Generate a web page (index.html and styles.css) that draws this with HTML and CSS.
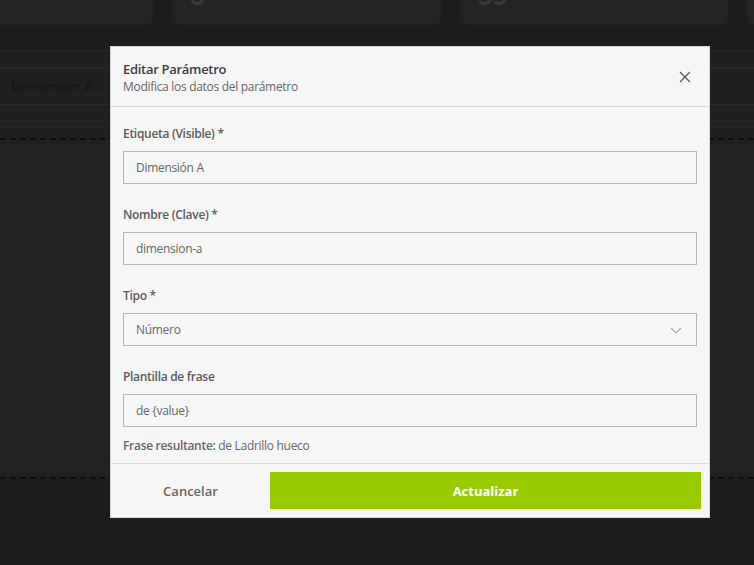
FILE: index.html
```html
<!DOCTYPE html>
<html lang="es">
<head>
<meta charset="utf-8">
<title>Editar Parámetro</title>
<link rel="stylesheet" href="styles.css">
</head>
<body>
<div class="page">
  <div class="cards">
    <div class="card card-a"></div>
    <div class="card card-b"><span class="big">8</span></div>
    <div class="card card-c"><span class="big">33</span></div>
    <div class="card card-d"></div>
  </div>
  <div class="table-area">
    <div class="table-head"></div>
    <div class="table-row"><span class="cell">Dimensión A...</span></div>
    <div class="table-foot"></div>
    <div class="table-gap"></div>
    <div class="dropzone"></div>
  </div>
</div>

<div class="backdrop"></div>

<div class="modal" role="dialog">
  <div class="modal-header">
    <div class="titles">
      <div class="title">Editar Parámetro</div>
      <div class="subtitle">Modifica los datos del parámetro</div>
    </div>
    <button class="close" aria-label="Cerrar">
      <svg width="12" height="12" viewBox="0 0 12 12"><path d="M1 1L11 11M11 1L1 11" stroke="#555" stroke-width="1.3" fill="none"/></svg>
    </button>
  </div>
  <div class="modal-body">
    <div class="field">
      <label class="label">Etiqueta (Visible) *</label>
      <div class="input">Dimensión A</div>
    </div>
    <div class="field">
      <label class="label">Nombre (Clave) *</label>
      <div class="input">dimension-a</div>
    </div>
    <div class="field">
      <label class="label">Tipo *</label>
      <div class="input select">Número
        <svg class="chev" width="12" height="7" viewBox="0 0 12 7"><path d="M1 1L6 6L11 1" stroke="#aaa" stroke-width="1.1" fill="none"/></svg>
      </div>
    </div>
    <div class="field last">
      <label class="label">Plantilla de frase</label>
      <div class="input">de {value}</div>
      <div class="result"><span class="result-key">Frase resultante:</span> de Ladrillo hueco</div>
    </div>
  </div>
  <div class="modal-footer">
    <button class="btn-cancel">Cancelar</button>
    <button class="btn-primary">Actualizar</button>
  </div>
</div>
</body>
</html>
```
FILE: styles.css
```css
* { box-sizing: border-box; }
html, body {
  margin: 0;
  padding: 0;
  width: 754px;
  height: 565px;
  overflow: hidden;
  background: #1f1f1f;
  font-family: "Open Sans", "Noto Sans", sans-serif;
}
.page { width: 754px; }
.cards {
  display: flex;
  gap: 19px;
  margin-top: -40px;
  margin-left: -40px;
}
.card {
  height: 65px;
  background: #252525;
  border-radius: 8px;
  flex: 0 0 auto;
  overflow: hidden;
}
.card-a { width: 193px; }
.card-b { width: 269px; }
.card-c { width: 268px; }
.card-d { width: 60px; }
.big {
  display: block;
  padding: 22px 0 0 18px;
  font-size: 26px;
  font-weight: 700;
  color: #3a3a3a;
  line-height: 26px;
}
.table-area {
  margin-top: 25px;
  background: #222222;
}
.table-head {
  height: 17px;
  border-top: 1px solid #2a2a2a;
}
.table-row {
  height: 38px;
  border-top: 1px solid #2b2b2b;
  border-bottom: 1px solid #2b2b2b;
  display: flex;
  align-items: center;
  padding-left: 11px;
}
.cell {
  font-size: 13px;
  font-weight: 700;
  color: #1a1a1a;
}
.table-foot {
  height: 17px;
  border-bottom: 1px solid #292929;
}
.table-gap {
  height: 18px;
  border-bottom: 2px dashed #101010;
}
.dropzone {
  height: 339px;
  border-bottom: 2px dashed #101010;
  background: #232323;
}
.backdrop {
  position: fixed;
  inset: 0;
  background: rgba(0,0,0,0.05);
}
.modal {
  position: fixed;
  left: 110px;
  top: 46px;
  width: 600px;
  height: 472px;
  background: #f6f6f6;
  border: 1px solid #d6d6d6;
  display: flex;
  flex-direction: column;
  color: #555;
  letter-spacing: -0.3px;
}
.modal-header {
  height: 60px;
  border-bottom: 1px solid #d9d9d9;
  display: flex;
  align-items: center;
  justify-content: space-between;
  padding: 2px 18px 0 12px;
}
.title {
  font-size: 13px;
  font-weight: 600;
  color: #3c3c3c;
  line-height: 17px;
}
.subtitle {
  font-size: 12px;
  color: #666;
  line-height: 17px;
}
.close {
  background: none;
  border: 0;
  padding: 0;
  width: 12px;
  height: 12px;
  display: flex;
  margin-bottom: 2px;
}
.modal-body {
  padding: 19px 12px 0 12px;
  flex: 1;
}
.field { margin-bottom: 23px; }
.field.last { margin-bottom: 0; }
.label {
  display: block;
  font-size: 12px;
  font-weight: 600;
  color: #5a5a5a;
  line-height: 16px;
  margin-bottom: 9px;
}
.input {
  height: 33px;
  border: 1px solid #b4b4b4;
  background: #f6f6f6;
  font-size: 12px;
  color: #666;
  display: flex;
  align-items: center;
  padding-left: 12px;
}
.select {
  justify-content: space-between;
  padding-right: 14px;
}
.chev { margin-top: 1px; }
.result {
  margin-top: 11px;
  font-size: 12px;
  color: #666;
  line-height: 16px;
}
.result-key { font-weight: 600; }
.modal-footer {
  border-top: 1px solid #d9d9d9;
  height: 54px;
  display: flex;
  padding: 8px 8px 8px 0;
  letter-spacing: 0;
}
.btn-cancel {
  flex: 0 0 159px;
  background: none;
  border: 0;
  font-family: inherit;
  font-size: 13px;
  font-weight: 600;
  color: #666;
}
.btn-primary {
  flex: 1;
  background: #99cc00;
  border: 0;
  font-family: inherit;
  font-size: 13px;
  font-weight: 700;
  color: #fff;
}
```
